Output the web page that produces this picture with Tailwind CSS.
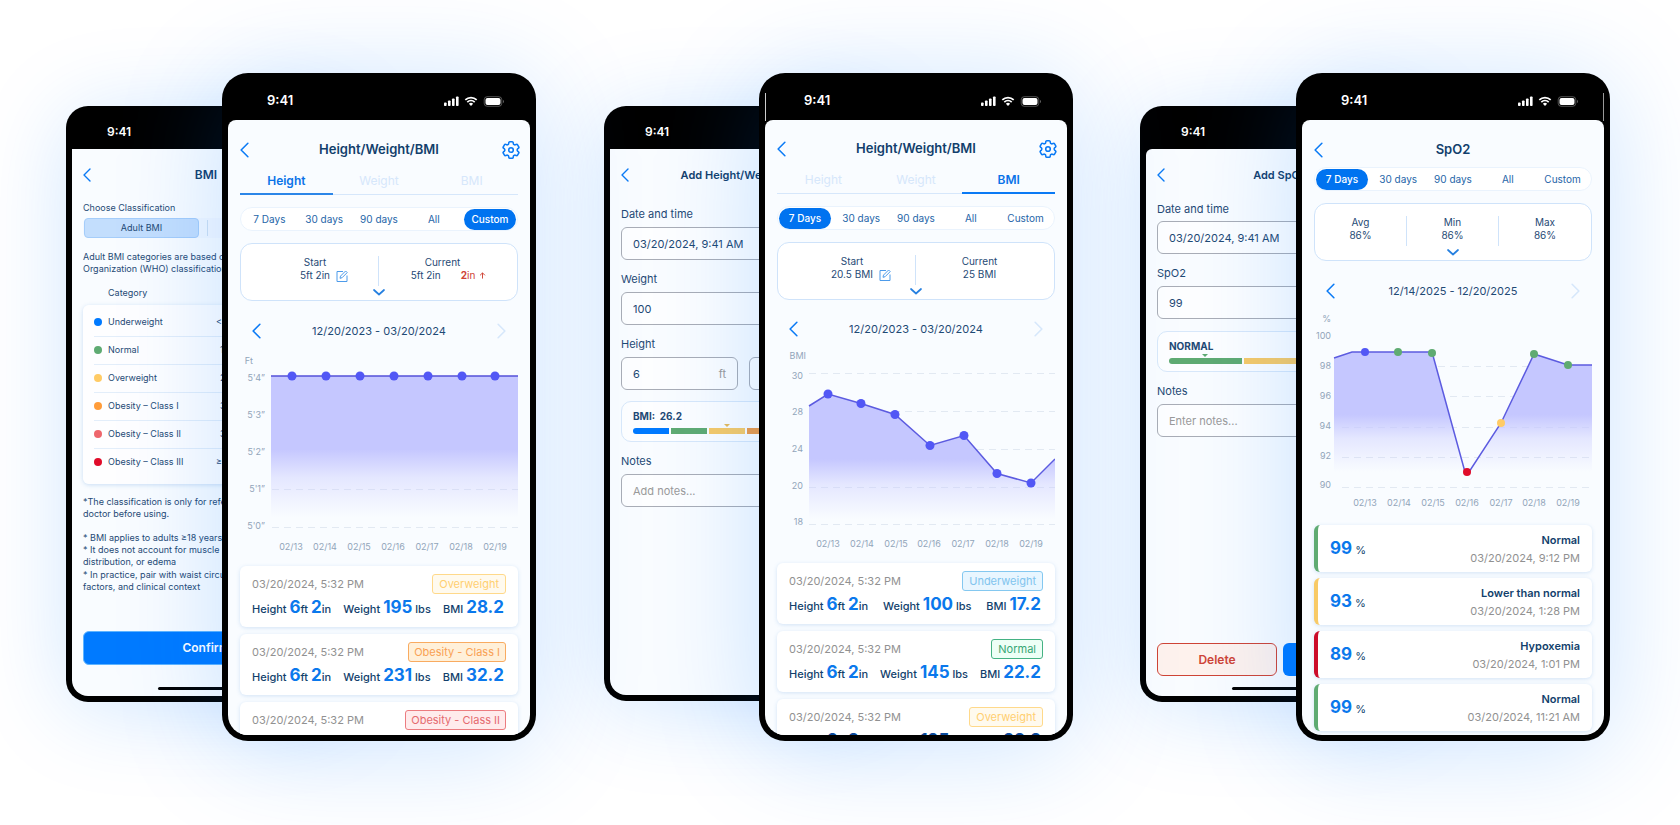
<!DOCTYPE html>
<html lang="en">
<head>
  <meta charset="UTF-8">
  <meta name="viewport" content="width=device-width, initial-scale=1.0">
  <title>Health Tracker Screens</title>
  <script src="https://cdn.jsdelivr.net/npm/@tailwindcss/browser@4"></script>
</head>
<body class="min-h-screen overflow-x-hidden bg-white font-['Inter','Liberation_Sans',sans-serif] text-[#1f4a75]">
  <!-- Shared icons -->
  <svg class="absolute size-0" aria-hidden="true">
    <symbol id="chevron" viewBox="0 0 8 14"><path d="M7 1 1 7l6 6" fill="none" stroke="currentColor" stroke-width="1.400" stroke-linecap="round" stroke-linejoin="round"/></symbol>
    <symbol id="chevron-down" viewBox="0 0 12 7"><path d="m1 1 5 4.500L11 1" fill="none" stroke="currentColor" stroke-width="1.700" stroke-linecap="round" stroke-linejoin="round"/></symbol>
    <symbol id="gear" viewBox="0 0 24 24">
      <path fill="none" stroke="currentColor" stroke-width="1.700" stroke-linejoin="round" d="M9.594 3.94c.09-.542.56-.94 1.11-.94h2.593c.55 0 1.02.398 1.11.94l.213 1.281c.063.374.313.686.645.87.074.04.147.083.22.127.325.196.72.257 1.075.124l1.217-.456a1.125 1.125 0 0 1 1.37.49l1.296 2.247a1.125 1.125 0 0 1-.26 1.431l-1.003.827c-.293.241-.438.613-.43.992a7.723 7.723 0 0 1 0 .255c-.008.378.137.75.43.991l1.004.827c.424.35.534.955.26 1.43l-1.298 2.247a1.125 1.125 0 0 1-1.369.491l-1.217-.456c-.355-.133-.75-.072-1.076.124a6.47 6.47 0 0 1-.22.128c-.331.183-.581.495-.644.869l-.213 1.281c-.09.543-.56.94-1.11.94h-2.594c-.55 0-1.019-.398-1.11-.94l-.213-1.281c-.062-.374-.312-.686-.644-.87a6.52 6.52 0 0 1-.22-.127c-.325-.196-.72-.257-1.076-.124l-1.217.456a1.125 1.125 0 0 1-1.369-.49l-1.297-2.247a1.125 1.125 0 0 1 .26-1.431l1.004-.827c.292-.24.437-.613.43-.991a6.932 6.932 0 0 1 0-.255c.007-.38-.138-.751-.43-.992l-1.004-.827a1.125 1.125 0 0 1-.26-1.43l1.297-2.247a1.125 1.125 0 0 1 1.37-.491l1.216.456c.356.133.751.072 1.076-.124.072-.044.146-.086.22-.128.332-.183.582-.495.644-.869l.214-1.28Z"/>
      <circle cx="12" cy="12" r="2.500" fill="none" stroke="currentColor" stroke-width="1.700"/>
    </symbol>
    <symbol id="edit" viewBox="0 0 12 12"><path d="M7 1.500H1V11.500H11V5.500M4 8.300l.5-2.200L9.600 1l1.600 1.600-5.100 5.100z" fill="none" stroke="currentColor" stroke-width="1" stroke-linejoin="round"/></symbol>
    <symbol id="status" viewBox="0 0 60 12">
      <g fill="#fff">
        <rect x="0" y="7.500" width="2.600" height="3.500" rx=".8"/><rect x="4" y="5.500" width="2.600" height="5.500" rx=".8"/><rect x="8" y="3.500" width="2.600" height="7.500" rx=".8"/><rect x="12" y="1.500" width="2.600" height="9.500" rx=".8"/>
        <path d="m27 11-2.100-2.300a3 3 0 0 1 4.200 0z"/>
        <rect x="41.500" y="3" width="15" height="7" rx="2"/>
        <path d="M59 5v3c1-.4 1-2.600 0-3z" opacity=".5"/>
      </g>
      <path d="M21.300 4.800a8.300 8.300 0 0 1 11.400 0M23.300 7.100a5.400 5.400 0 0 1 7.400 0" fill="none" stroke="#fff" stroke-width="1.700"/>
      <rect x="40.200" y="1.700" width="17.600" height="9.600" rx="3" fill="none" stroke="#fff" stroke-opacity=".4" stroke-width=".8"/>
    </symbol>
    <symbol id="arrow-up" viewBox="0 0 8 8"><path d="M4 7.500V1M1.200 3.800 4 1l2.800 2.800" fill="none" stroke="currentColor" stroke-width="1.100"/></symbol>
    <linearGradient id="fade" x1="0" y1="0" x2="0" y2="1">
      <stop offset="0" stop-color="#c5c7ff"/><stop offset=".52" stop-color="#c5c7ff"/><stop offset=".72" stop-color="#c5c7ff" stop-opacity=".4"/><stop offset="1" stop-color="#c5c7ff" stop-opacity="0"/>
    </linearGradient>
  </svg>

  <main class="grid grid-cols-3 gap-[67px] pt-[73px] pr-[70px] pb-[84px] pl-[66px]">

    <!-- Height -->
    <section class="grid grid-cols-[156fr_124fr_190fr] items-start">
      <article class="col-span-2 col-start-1 row-start-1 mt-[33px] flex aspect-[280/596] flex-col overflow-hidden rounded-[22px] bg-black p-[6px] shadow-[0_8px_90px_rgba(0,122,255,0.18)]">
        <div class="flex h-[37px] shrink-0 items-center pl-[35px] pt-[2px] text-[12px] font-semibold text-white">9:41</div>
        <div class="flex min-h-0 flex-1 flex-col rounded-b-[16px] bg-[#f9fcff] px-[11px] text-[9px] leading-3">
          <header class="mt-4 grid h-5 shrink-0 grid-cols-[20px_1fr_20px] items-center text-center">
            <button aria-label="Back" class="text-[#0a7af5]"><svg class="h-[14px] w-2"><use href="#chevron"/></svg></button>
            <h1 class="text-[12px] font-semibold text-[#123f6c]">BMI</h1>
          </header>
          <p class="mt-[17px]">Choose Classification</p>
          <div class="mt-1 flex h-5 shrink-0 items-center rounded-md bg-[#f3f8ff]">
            <button class="ml-px h-5 w-[115px] rounded-[4px] border border-[#a5cdfa] bg-[#c3defd]">Adult BMI</button>
            <span class="ml-2 h-4 w-px bg-[#cfe0f2]"></span>
          </div>
          <p class="mt-[13px] whitespace-nowrap">Adult BMI categories are based on World Health<br>Organization (WHO) classifications.</p>
          <p class="mt-3 pl-[25px]">Category</p>
          <div class="mt-[6px] rounded-md bg-white/80 px-[11px] pt-[3px] pb-[8px] shadow-[0_1px_4px_rgba(60,130,210,0.25)]">
            <table class="w-full whitespace-nowrap">
              <tbody class="divide-y divide-[#e3eefa]">
                <tr class="h-7"><td class="w-[14px]"><span class="block size-2 rounded-full bg-[#007aff]"></span></td><td>Underweight</td><td class="w-[102px]">&lt; 18.5</td></tr>
                <tr class="h-7"><td><span class="block size-2 rounded-full bg-[#5fab72]"></span></td><td>Normal</td><td class="pl-1">18.5 – 24.9</td></tr>
                <tr class="h-7"><td><span class="block size-2 rounded-full bg-[#ffcb65]"></span></td><td>Overweight</td><td class="pl-1">25 – 29.9</td></tr>
                <tr class="h-7"><td><span class="block size-2 rounded-full bg-[#ff9c3a]"></span></td><td>Obesity – Class I</td><td class="pl-1">30 – 34.9</td></tr>
                <tr class="h-7"><td><span class="block size-2 rounded-full bg-[#ee666c]"></span></td><td>Obesity – Class II</td><td class="pl-1">35 – 39.9</td></tr>
                <tr class="h-7"><td><span class="block size-2 rounded-full bg-[#e00c2a]"></span></td><td>Obesity – Class III</td><td>≥ 40</td></tr>
              </tbody>
            </table>
          </div>
          <p class="mt-3 whitespace-nowrap">*The classification is only for reference. Ask a<br>doctor before using.</p>
          <p class="mt-3 whitespace-nowrap">* BMI applies to adults ≥18 years<br>* It does not account for muscle mass,<br>distribution, or edema</p>
          <p class="mt-px whitespace-nowrap">* In practice, pair with waist circumference,<br>factors, and clinical context</p>
          <button class="mt-auto h-[34px] shrink-0 rounded-md border border-[#5eb4ff] bg-[#007aff] text-[12px] font-semibold text-white">Confirm</button>
          <span class="mt-[22px] mb-[6px] h-[3px] w-24 shrink-0 self-center rounded-full bg-black"></span>
        </div>
      </article>

      <article class="z-10 col-span-2 col-start-2 row-start-1 flex aspect-[314/668] flex-col overflow-hidden rounded-[26px] bg-black p-[6px] shadow-[0_8px_110px_rgba(0,122,255,0.2)]">
        <div class="flex h-[41px] shrink-0 items-center justify-between pr-[26px] pl-[39px] pt-[3px] text-[13px] font-semibold text-white">9:41<svg class="h-3 w-[60px]"><use href="#status"/></svg></div>
        <div class="flex min-h-0 flex-1 flex-col overflow-hidden rounded-t-lg rounded-b-[20px] bg-[#f9fcff] px-3">
          <header class="mt-[18px] grid h-6 shrink-0 grid-cols-[20px_1fr_20px] items-center text-center">
            <button aria-label="Back" class="text-[#0a7af5]"><svg class="h-4 w-[9px]"><use href="#chevron"/></svg></button>
            <h1 class="text-[13px] font-semibold text-[#123f6c]">Height/Weight/BMI</h1>
            <button aria-label="Settings" class="text-[#0a7af5]"><svg class="ml-[2px] size-[22px]"><use href="#gear"/></svg></button>
          </header>
          <nav class="mt-[6px] grid h-[27px] shrink-0 grid-cols-3 border-b border-[#d6e7fb] text-[12px] text-[#d6e7fb]">
            <button class="-mb-px border-b-2 border-[#2c86e8] text-[12px] font-semibold text-[#0a73e8]">Height</button>
            <button>Weight</button>
            <button>BMI</button>
          </nav>
          <div class="mt-3 grid h-6 shrink-0 grid-cols-5 items-center rounded-full border border-[#eaf3fd] bg-white px-px text-[10px] text-[#2565a8]">
            <button>7 Days</button>
            <button>30 days</button>
            <button>90 days</button>
            <button>All</button>
            <button class="h-[21px] w-[52px] justify-self-end rounded-full bg-[#0073f0] font-medium text-white">Custom</button>
          </div>
          <div class="mt-3 flex h-[58px] shrink-0 flex-col items-center rounded-xl border border-[#cfe3fa] bg-white pt-3 text-[10px] leading-[13px]">
            <div class="grid w-[254px] grid-cols-2 divide-x divide-[#cfe3fa] text-center">
              <div class="pb-1">
                <p>Start</p>
                <div class="grid grid-cols-[1fr_auto_1fr]"><span></span><span>5ft 2in</span><button aria-label="Edit start" class="ml-[6px] text-[#4d9bea]"><svg class="size-3"><use href="#edit"/></svg></button></div>
              </div>
              <div class="pb-1">
                <p>Current</p>
                <div class="flex items-center justify-center gap-5 pl-3"><span>5ft 2in</span><span class="flex items-center gap-1 text-[#cf4436]"><span><b>2</b>in</span><svg class="size-[7px]"><use href="#arrow-up"/></svg></span></div>
              </div>
            </div>
            <button aria-label="Show more" class="mt-[3px] text-[#2680e0]"><svg class="h-[7px] w-3"><use href="#chevron-down"/></svg></button>
          </div>
          <div class="mt-5 flex h-5 shrink-0 items-center justify-between px-3 text-[11px]">
            <button aria-label="Previous period" class="text-[#0a7af5]"><svg class="h-4 w-[9px]"><use href="#chevron"/></svg></button>
            <span>12/20/2023 - 03/20/2024</span>
            <button aria-label="Next period" class="text-[#d6e7fb]"><svg class="h-4 w-[9px] rotate-180"><use href="#chevron"/></svg></button>
          </div>
          <svg class="mt-2 w-full shrink-0" viewBox="0 0 278 209" role="img" aria-label="Height chart">
            <g stroke="#e2e9f2" stroke-dasharray="7 5"><path d="M32 140.500H278M32 178.500H278"/></g>
            <path d="M31 27H278V168H31z" fill="url(#fade)"/>
            <path d="M31 27H278" stroke="#5350d8" stroke-width="1.500"/>
            <g fill="#5257f5"><circle cx="52" cy="27" r="4.500"/><circle cx="86" cy="27" r="4.500"/><circle cx="120" cy="27" r="4.500"/><circle cx="154" cy="27" r="4.500"/><circle cx="188" cy="27" r="4.500"/><circle cx="222" cy="27" r="4.500"/><circle cx="255" cy="27" r="4.500"/></g>
            <g fill="#92a5ba" font-size="9" text-anchor="end"><text x="13" y="15">Ft</text><text x="25" y="32">5'4”</text><text x="25" y="69">5'3”</text><text x="25" y="106">5'2”</text><text x="25" y="143">5'1”</text><text x="25" y="180">5'0”</text></g>
            <g fill="#92a5ba" font-size="9" text-anchor="middle"><text x="51" y="201">02/13</text><text x="85" y="201">02/14</text><text x="119" y="201">02/15</text><text x="153" y="201">02/16</text><text x="187" y="201">02/17</text><text x="221" y="201">02/18</text><text x="255" y="201">02/19</text></g>
          </svg>
          <ul class="mt-2 flex flex-col gap-[7px] text-[11px] text-[#123f6c]">
            <li class="h-[61px] shrink-0 rounded-md bg-white px-3 pt-[8px] shadow-[0_1px_4px_rgba(60,130,210,0.2)]">
              <div class="flex items-center justify-between text-[#919191]"><span>03/20/2024, 5:32 PM</span><span class="rounded-[3px] border border-[#ffd98a] bg-[#fffaee] px-[6px] leading-[18px] text-[#ffcf70]">Overweight</span></div>
              <div class="mt-px flex items-baseline justify-between pr-[2px] leading-6 font-medium"><span>Height <b class="text-[17px] text-[#0a78ec]">6</b>ft <b class="text-[17px] text-[#0a78ec]">2</b>in</span><span>Weight <b class="text-[17px] text-[#0a78ec]">195</b> lbs</span><span>BMI <b class="text-[17px] text-[#0a78ec]">28.2</b></span></div>
            </li>
            <li class="h-[61px] shrink-0 rounded-md bg-white px-3 pt-[8px] shadow-[0_1px_4px_rgba(60,130,210,0.2)]">
              <div class="flex items-center justify-between text-[#919191]"><span>03/20/2024, 5:32 PM</span><span class="rounded-[3px] border border-[#f9ab60] bg-[#fff0d9] px-[5px] leading-[18px] text-[#f9a154]">Obesity - Class I</span></div>
              <div class="mt-px flex items-baseline justify-between pr-[2px] leading-6 font-medium"><span>Height <b class="text-[17px] text-[#0a78ec]">6</b>ft <b class="text-[17px] text-[#0a78ec]">2</b>in</span><span>Weight <b class="text-[17px] text-[#0a78ec]">231</b> lbs</span><span>BMI <b class="text-[17px] text-[#0a78ec]">32.2</b></span></div>
            </li>
            <li class="h-[61px] shrink-0 rounded-md bg-white px-3 pt-[8px] shadow-[0_1px_4px_rgba(60,130,210,0.2)]">
              <div class="flex items-center justify-between text-[#919191]"><span>03/20/2024, 5:32 PM</span><span class="rounded-[3px] border border-[#ec7c80] bg-[#ffebec] px-[5px] leading-[18px] text-[#e56a6f]">Obesity - Class II</span></div>
            </li>
          </ul>
        </div>
      </article>
    </section>

    <!-- BMI -->
    <section class="grid grid-cols-[156fr_124fr_190fr] items-start">
      <article class="col-span-2 col-start-1 row-start-1 mt-[33px] ml-px flex aspect-[280/597] flex-col overflow-hidden rounded-[22px] bg-black p-[6px] shadow-[0_8px_90px_rgba(0,122,255,0.18)]">
        <div class="flex h-[37px] shrink-0 items-center pl-[35px] pt-[2px] text-[12px] font-semibold text-white">9:41</div>
        <form class="flex min-h-0 flex-1 flex-col rounded-b-[16px] bg-[#f9fcff] px-[11px] text-[11px] leading-4">
          <header class="mt-4 grid h-5 shrink-0 grid-cols-[20px_1fr_20px] items-center text-center">
            <button type="button" aria-label="Back" class="text-[#0a7af5]"><svg class="h-[14px] w-2"><use href="#chevron"/></svg></button>
            <h1 class="whitespace-nowrap font-semibold text-[#123f6c]">Add Height/Weight/BMI</h1>
          </header>
          <label for="bmi-date" class="mt-[21px]">Date and time</label>
          <input id="bmi-date" type="text" value="03/20/2024, 9:41 AM" class="mt-[5px] h-[33px] shrink-0 rounded-md border border-[#a9adb6] bg-white/60 px-[11px]">
          <label for="bmi-weight" class="mt-[11px]">Weight</label>
          <input id="bmi-weight" type="text" value="100" class="mt-[5px] h-[33px] shrink-0 rounded-md border border-[#a9adb6] bg-white/60 px-[11px]">
          <label for="bmi-feet" class="mt-[11px]">Height</label>
          <div class="mt-[5px] grid shrink-0 grid-cols-2 gap-[11px]">
            <div class="flex h-[33px] items-center rounded-md border border-[#a9adb6] bg-white/60 px-[11px]"><input id="bmi-feet" type="text" value="6" class="w-full min-w-0"><span class="text-[#9a9a9a]">ft</span></div>
            <div class="h-[33px] rounded-md border border-[#a9adb6] bg-white/60"></div>
          </div>
          <div class="mt-[11px] h-[41px] shrink-0 rounded-[10px] border border-[#d8e8fa] bg-white/60 px-[11px] pt-[6px]">
            <p class="text-[10px] font-bold">BMI:&nbsp; 26.2</p>
            <div class="relative mt-1 grid h-[6px] grid-cols-[repeat(5,36px)_1fr] gap-[2px]">
              <i class="rounded-l-full bg-[#007aff]"></i><i class="bg-[#5fab72]"></i><i class="bg-[#f8ca66]"></i><i class="bg-[#ee9a45]"></i><i class="bg-[#ee666c]"></i><i class="rounded-r-full bg-[#e00c2a]"></i>
              <svg class="absolute -top-1 left-[41%] h-[3px] w-[6px]" viewBox="0 0 6 3"><path d="M0 0h6L3 3z" fill="#e8bb58"/></svg>
            </div>
          </div>
          <label for="bmi-notes" class="mt-[11px]">Notes</label>
          <input id="bmi-notes" type="text" placeholder="Add notes..." class="mt-[5px] h-[33px] shrink-0 rounded-md border border-[#a9adb6] bg-white/60 px-[11px] placeholder:text-[#9a9a9a]">
        </form>
      </article>

      <article class="relative z-10 col-span-2 col-start-2 row-start-1 flex aspect-[314/668] flex-col overflow-hidden rounded-[26px] bg-black p-[6px] shadow-[0_8px_110px_rgba(0,122,255,0.2)]">
        <span class="absolute top-5 left-[6px] h-7 w-px bg-white/80"></span>
        <div class="flex h-[41px] shrink-0 items-center justify-between pr-[26px] pl-[39px] pt-[3px] text-[13px] font-semibold text-white">9:41<svg class="h-3 w-[60px]"><use href="#status"/></svg></div>
        <div class="flex min-h-0 flex-1 flex-col overflow-hidden rounded-t-lg rounded-b-[20px] bg-[#f9fcff] px-3">
          <header class="mt-[17px] grid h-6 shrink-0 grid-cols-[20px_1fr_20px] items-center text-center">
            <button aria-label="Back" class="text-[#0a7af5]"><svg class="h-4 w-[9px]"><use href="#chevron"/></svg></button>
            <h1 class="text-[13px] font-semibold text-[#123f6c]">Height/Weight/BMI</h1>
            <button aria-label="Settings" class="text-[#0a7af5]"><svg class="ml-[2px] size-[22px]"><use href="#gear"/></svg></button>
          </header>
          <nav class="mt-[6px] grid h-[27px] shrink-0 grid-cols-3 border-b border-[#d6e7fb] text-[12px] text-[#d6e7fb]">
            <button>Height</button>
            <button>Weight</button>
            <button class="-mb-px border-b-2 border-[#0a7af5] text-[12px] font-semibold text-[#0a73e8]">BMI</button>
          </nav>
          <div class="mt-3 grid h-6 shrink-0 grid-cols-5 items-center rounded-full border border-[#eaf3fd] bg-white px-px text-[10px] text-[#2565a8]">
            <button class="h-[21px] w-[52px] rounded-full bg-[#0073f0] font-medium text-white">7 Days</button>
            <button>30 days</button>
            <button>90 days</button>
            <button>All</button>
            <button>Custom</button>
          </div>
          <div class="mt-3 flex h-[58px] shrink-0 flex-col items-center rounded-xl border border-[#cfe3fa] bg-white pt-3 text-[10px] leading-[13px]">
            <div class="grid w-[254px] grid-cols-2 divide-x divide-[#cfe3fa] text-center">
              <div class="pb-1">
                <p>Start</p>
                <div class="grid grid-cols-[1fr_auto_1fr]"><span></span><span>20.5 BMI</span><button aria-label="Edit start" class="ml-[6px] text-[#4d9bea]"><svg class="size-3"><use href="#edit"/></svg></button></div>
              </div>
              <div class="pb-1">
                <p>Current</p>
                <p>25 BMI</p>
              </div>
            </div>
            <button aria-label="Show more" class="mt-[3px] text-[#2680e0]"><svg class="h-[7px] w-3"><use href="#chevron-down"/></svg></button>
          </div>
          <div class="mt-[19px] flex h-5 shrink-0 items-center justify-between px-3 text-[11px]">
            <button aria-label="Previous period" class="text-[#0a7af5]"><svg class="h-4 w-[9px]"><use href="#chevron"/></svg></button>
            <span>12/20/2023 - 03/20/2024</span>
            <button aria-label="Next period" class="text-[#d6e7fb]"><svg class="h-4 w-[9px] rotate-180"><use href="#chevron"/></svg></button>
          </div>
          <svg class="mt-2 w-full shrink-0" viewBox="0 0 278 208" role="img" aria-label="BMI chart">
            <g stroke="#e2e9f2" stroke-dasharray="7 5"><path d="M32 26.500H278M32 64.500H278M32 102.500H278M32 140.500H278M32 177.500H278"/></g>
            <path d="M32 59 51 47 84 56.500 118 67.500 153 98.500 187 88.500 220 126.500 254 136 278 112V172H32z" fill="url(#fade)"/>
            <path d="M32 59 51 47 84 56.500 118 67.500 153 98.500 187 88.500 220 126.500 254 136 278 112" fill="none" stroke="#5c5be0" stroke-width="1.500"/>
            <g fill="#5257f5"><circle cx="51" cy="47" r="4.500"/><circle cx="84" cy="56.500" r="4.500"/><circle cx="118" cy="67.500" r="4.500"/><circle cx="153" cy="98.500" r="4.500"/><circle cx="187" cy="88.500" r="4.500"/><circle cx="220" cy="126.500" r="4.500"/><circle cx="254" cy="136" r="4.500"/></g>
            <g fill="#92a5ba" font-size="9" text-anchor="end"><text x="29" y="12">BMI</text><text x="26" y="32">30</text><text x="26" y="68">28</text><text x="26" y="105">24</text><text x="26" y="142">20</text><text x="26" y="178">18</text></g>
            <g fill="#92a5ba" font-size="9" text-anchor="middle"><text x="51" y="200">02/13</text><text x="85" y="200">02/14</text><text x="119" y="200">02/15</text><text x="152" y="200">02/16</text><text x="186" y="200">02/17</text><text x="220" y="200">02/18</text><text x="254" y="200">02/19</text></g>
          </svg>
          <ul class="mt-2 flex flex-col gap-[7px] text-[11px] text-[#123f6c]">
            <li class="h-[61px] shrink-0 rounded-md bg-white px-3 pt-[8px] shadow-[0_1px_4px_rgba(60,130,210,0.2)]">
              <div class="flex items-center justify-between text-[#919191]"><span>03/20/2024, 5:32 PM</span><span class="rounded-[3px] border border-[#84c8f0] bg-[#e8f6ff] px-[6px] leading-[18px] text-[#80c4ee]">Underweight</span></div>
              <div class="mt-px flex items-baseline justify-between pr-[2px] leading-6 font-medium"><span>Height <b class="text-[17px] text-[#0a78ec]">6</b>ft <b class="text-[17px] text-[#0a78ec]">2</b>in</span><span>Weight <b class="text-[17px] text-[#0a78ec]">100</b> lbs</span><span>BMI <b class="text-[17px] text-[#0a78ec]">17.2</b></span></div>
            </li>
            <li class="h-[61px] shrink-0 rounded-md bg-white px-3 pt-[8px] shadow-[0_1px_4px_rgba(60,130,210,0.2)]">
              <div class="flex items-center justify-between text-[#919191]"><span>03/20/2024, 5:32 PM</span><span class="rounded-[3px] border border-[#45b283] bg-[#edfff6] px-[6px] leading-[18px] text-[#36a674]">Normal</span></div>
              <div class="mt-px flex items-baseline justify-between pr-[2px] leading-6 font-medium"><span>Height <b class="text-[17px] text-[#0a78ec]">6</b>ft <b class="text-[17px] text-[#0a78ec]">2</b>in</span><span>Weight <b class="text-[17px] text-[#0a78ec]">145</b> lbs</span><span>BMI <b class="text-[17px] text-[#0a78ec]">22.2</b></span></div>
            </li>
            <li class="h-[61px] shrink-0 rounded-md bg-white px-3 pt-[8px] shadow-[0_1px_4px_rgba(60,130,210,0.2)]">
              <div class="flex items-center justify-between text-[#919191]"><span>03/20/2024, 5:32 PM</span><span class="rounded-[3px] border border-[#ffd98a] bg-[#fffaee] px-[6px] leading-[18px] text-[#ffcf70]">Overweight</span></div>
              <div class="mt-px flex items-baseline justify-between pr-[2px] leading-6 font-medium"><span>Height <b class="text-[17px] text-[#0a4a9c]">6</b>ft <b class="text-[17px] text-[#0a4a9c]">2</b>in</span><span>Weight <b class="text-[17px] text-[#0a4a9c]">195</b> lbs</span><span>BMI <b class="text-[17px] text-[#0a4a9c]">28.2</b></span></div>
            </li>
          </ul>
        </div>
      </article>
    </section>

    <!-- SpO2 -->
    <section class="grid grid-cols-[156fr_124fr_190fr] items-start">
      <article class="col-span-2 col-start-1 row-start-1 mt-[33px] flex aspect-[280/596] flex-col overflow-hidden rounded-[22px] bg-black p-[6px] shadow-[0_8px_90px_rgba(0,122,255,0.18)]">
        <div class="flex h-[37px] shrink-0 items-center pl-[35px] pt-[2px] text-[12px] font-semibold text-white">9:41</div>
        <form class="flex min-h-0 flex-1 flex-col rounded-t-md rounded-b-[16px] bg-[#f9fcff] px-[11px] text-[11px] leading-4">
          <header class="mt-4 grid h-5 shrink-0 grid-cols-[20px_1fr_20px] items-center text-center">
            <button type="button" aria-label="Back" class="text-[#0a7af5]"><svg class="h-[14px] w-2"><use href="#chevron"/></svg></button>
            <h1 class="font-semibold text-[#123f6c]">Add SpO2</h1>
          </header>
          <label for="spo2-date" class="mt-4">Date and time</label>
          <input id="spo2-date" type="text" value="03/20/2024, 9:41 AM" class="mt-1 h-[33px] shrink-0 rounded-md border border-[#a9adb6] bg-white/60 px-[11px]">
          <label for="spo2-value" class="mt-[11px]">SpO2</label>
          <input id="spo2-value" type="text" value="99" class="mt-[5px] h-[33px] shrink-0 rounded-md border border-[#a9adb6] bg-white/60 px-[11px]">
          <div class="mt-3 h-[41px] shrink-0 rounded-[10px] border border-[#d8e8fa] bg-white/60 px-[11px] pt-[6px]">
            <p class="text-[10px] font-bold">NORMAL</p>
            <div class="relative mt-1 grid h-[6px] grid-cols-3 gap-[2px]">
              <i class="rounded-l-full bg-[#5fab72]"></i><i class="bg-[#f8ca66]"></i><i class="rounded-r-full bg-[#e00c2a]"></i>
              <svg class="absolute -top-1 left-[15%] h-[3px] w-[6px]" viewBox="0 0 6 3"><path d="M0 0h6L3 3z" fill="#5fab72"/></svg>
            </div>
          </div>
          <label for="spo2-notes" class="mt-[11px]">Notes</label>
          <input id="spo2-notes" type="text" placeholder="Enter notes..." class="mt-[5px] h-[33px] shrink-0 rounded-md border border-[#a9adb6] bg-white/60 px-[11px] placeholder:text-[#9a9a9a]">
          <div class="mt-auto grid shrink-0 grid-cols-2 gap-[6px]">
            <button type="button" class="h-[33px] rounded-md border border-[#cf4436] bg-[#fef2ed] text-[12px] font-semibold text-[#cf4436]">Delete</button>
            <button type="button" aria-label="Save" class="h-[33px] rounded-md bg-[#007aff]"></button>
          </div>
          <span class="mt-[11px] mb-[6px] h-[3px] w-24 shrink-0 self-center rounded-full bg-black"></span>
        </form>
      </article>

      <article class="relative z-10 col-span-2 col-start-2 row-start-1 flex aspect-[314/668] flex-col overflow-hidden rounded-[26px] bg-black p-[6px] shadow-[0_8px_110px_rgba(0,122,255,0.2)]">
        <span class="absolute top-5 right-[6px] h-7 w-px bg-white/60"></span>
        <div class="flex h-[41px] shrink-0 items-center justify-between pr-[26px] pl-[39px] pt-[3px] text-[13px] font-semibold text-white">9:41<svg class="h-3 w-[60px]"><use href="#status"/></svg></div>
        <div class="flex min-h-0 flex-1 flex-col overflow-hidden rounded-t-lg rounded-b-[20px] bg-[#f9fcff] px-3">
          <header class="mt-[18px] grid h-6 shrink-0 grid-cols-[20px_1fr_20px] items-center text-center">
            <button aria-label="Back" class="text-[#0a7af5]"><svg class="h-4 w-[9px]"><use href="#chevron"/></svg></button>
            <h1 class="text-[13px] font-semibold text-[#123f6c]">SpO2</h1>
          </header>
          <div class="mt-[5px] grid h-6 shrink-0 grid-cols-5 items-center rounded-full border border-[#eaf3fd] bg-white px-px text-[10px] text-[#2565a8]">
            <button class="h-[21px] w-[52px] rounded-full bg-[#0073f0] font-medium text-white">7 Days</button>
            <button>30 days</button>
            <button>90 days</button>
            <button>All</button>
            <button>Custom</button>
          </div>
          <div class="mt-3 flex h-[58px] shrink-0 flex-col items-center rounded-xl border border-[#cfe3fa] bg-white pt-3 text-[10px] leading-[13px]">
            <div class="grid w-full grid-cols-3 divide-x divide-[#cfe3fa] text-center">
              <div class="pb-1"><p>Avg</p><p>86%</p></div>
              <div class="pb-1"><p>Min</p><p>86%</p></div>
              <div class="pb-1"><p>Max</p><p>86%</p></div>
            </div>
            <button aria-label="Show more" class="mt-[3px] text-[#2680e0]"><svg class="h-[7px] w-3"><use href="#chevron-down"/></svg></button>
          </div>
          <div class="mt-5 flex h-5 shrink-0 items-center justify-between px-3 text-[11px]">
            <button aria-label="Previous period" class="text-[#0a7af5]"><svg class="h-4 w-[9px]"><use href="#chevron"/></svg></button>
            <span>12/14/2025 - 12/20/2025</span>
            <button aria-label="Next period" class="text-[#d6e7fb]"><svg class="h-4 w-[9px] rotate-180"><use href="#chevron"/></svg></button>
          </div>
          <svg class="mt-2 w-full shrink-0" viewBox="0 0 278 208" role="img" aria-label="SpO2 chart">
            <g stroke="#e2e9f2" stroke-dasharray="7 5"><path d="M28 57.500H278M28 87.500H278M28 118.500H278M28 148.500H278M28 178.500H278"/></g>
            <path d="M20 49 38 43H118L151 163H155L187 114 220 45 254 56H278V163H20z" fill="url(#fade)"/>
            <path d="M20 49 38 43H118L151 163H155L187 114 220 45 254 56H278" fill="none" stroke="#5c5be0" stroke-width="1.500"/>
            <circle cx="51" cy="43" r="4" fill="#5257f5"/><circle cx="84" cy="43" r="4" fill="#5fab72"/><circle cx="118" cy="44" r="4" fill="#5fab72"/><circle cx="153" cy="163" r="4" fill="#e00c2a"/><circle cx="187" cy="114" r="4" fill="#ffcb65"/><circle cx="220" cy="45" r="4" fill="#5fab72"/><circle cx="254" cy="56" r="4" fill="#5fab72"/>
            <g fill="#92a5ba" font-size="9" text-anchor="end"><text x="17" y="13">%</text><text x="17" y="30">100</text><text x="17" y="60">98</text><text x="17" y="90">96</text><text x="17" y="120">94</text><text x="17" y="150">92</text><text x="17" y="179">90</text></g>
            <g fill="#92a5ba" font-size="9" text-anchor="middle"><text x="51" y="197">02/13</text><text x="85" y="197">02/14</text><text x="119" y="197">02/15</text><text x="153" y="197">02/16</text><text x="187" y="197">02/17</text><text x="220" y="197">02/18</text><text x="254" y="197">02/19</text></g>
          </svg>
          <ul class="mt-2 flex flex-col gap-[6px] text-[11px] text-[#919191]">
            <li class="flex h-[47px] shrink-0 items-center justify-between rounded-md border-l-4 border-[#5fab72] bg-white pr-3 pl-3 shadow-[0_1px_4px_rgba(60,130,210,0.2)]">
              <span class="text-[#123f6c]"><b class="text-[17px] text-[#0a78ec]">99</b> %</span>
              <div class="text-right leading-[18px]"><p class="font-semibold text-[#123f6c]">Normal</p><p>03/20/2024, 9:12 PM</p></div>
            </li>
            <li class="flex h-[47px] shrink-0 items-center justify-between rounded-md border-l-4 border-[#f8ca66] bg-white pr-3 pl-3 shadow-[0_1px_4px_rgba(60,130,210,0.2)]">
              <span class="text-[#123f6c]"><b class="text-[17px] text-[#0a78ec]">93</b> %</span>
              <div class="text-right leading-[18px]"><p class="font-semibold text-[#123f6c]">Lower than normal</p><p>03/20/2024, 1:28 PM</p></div>
            </li>
            <li class="flex h-[47px] shrink-0 items-center justify-between rounded-md border-l-4 border-[#cc0c2a] bg-white pr-3 pl-3 shadow-[0_1px_4px_rgba(60,130,210,0.2)]">
              <span class="text-[#123f6c]"><b class="text-[17px] text-[#0a78ec]">89</b> %</span>
              <div class="text-right leading-[18px]"><p class="font-semibold text-[#123f6c]">Hypoxemia</p><p>03/20/2024, 1:01 PM</p></div>
            </li>
            <li class="flex h-[47px] shrink-0 items-center justify-between rounded-md border-l-4 border-[#5fab72] bg-white pr-3 pl-3 shadow-[0_1px_4px_rgba(60,130,210,0.2)]">
              <span class="text-[#123f6c]"><b class="text-[17px] text-[#0a78ec]">99</b> %</span>
              <div class="text-right leading-[18px]"><p class="font-semibold text-[#123f6c]">Normal</p><p>03/20/2024, 11:21 AM</p></div>
            </li>
          </ul>
        </div>
      </article>
    </section>
  </main>
</body>
</html>
